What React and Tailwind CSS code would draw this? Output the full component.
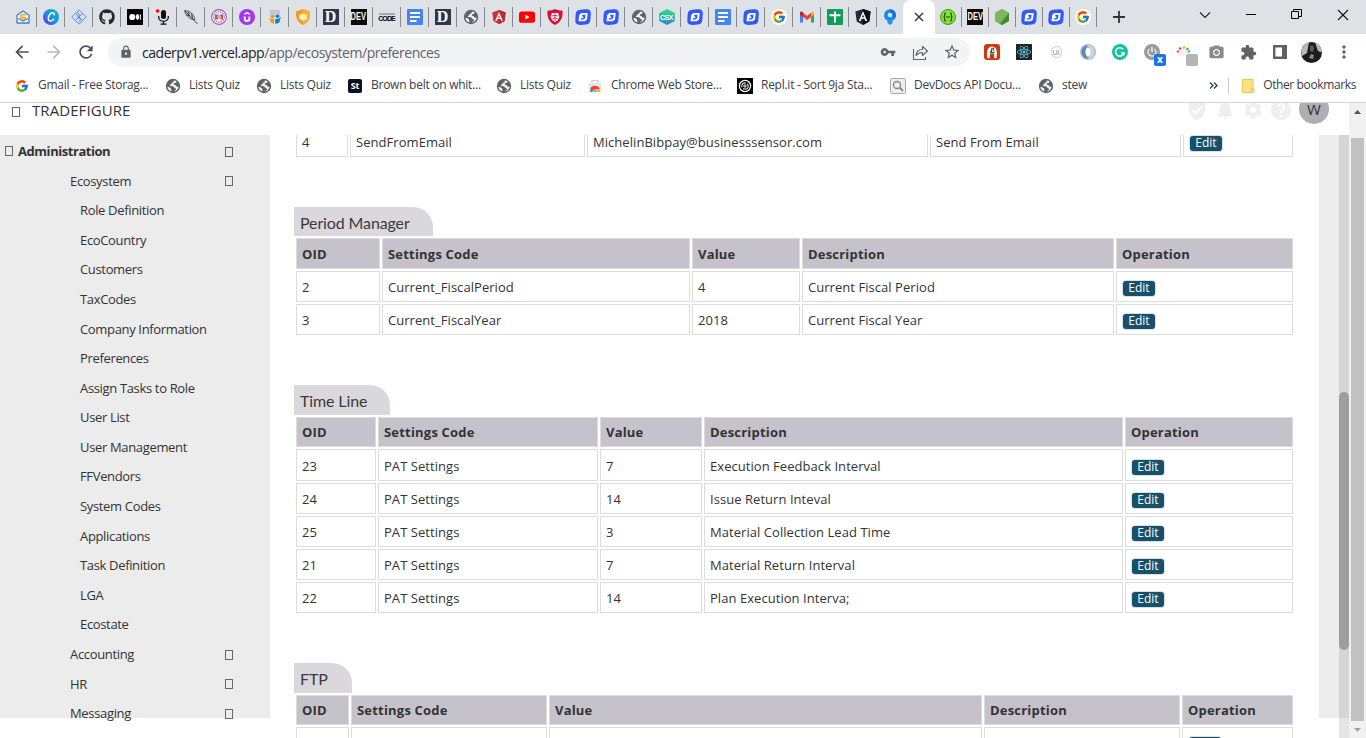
import React from "react";
import { FcGoogle } from "react-icons/fc";
import { FaGithub, FaReact } from "react-icons/fa";
import {
  MdVpnKey, MdStarBorder, MdLock, MdExtension, MdArrowBack, MdArrowForward, MdRefresh,
  MdCameraAlt, MdMoreVert, MdNotifications, MdSettings, MdHelp, MdVerifiedUser,
} from "react-icons/md";

const S = ({ children, size = 16, vb = "0 0 16 16", className = "" }) => (
  <svg width={size} height={size} viewBox={vb} className={className} fill="none">{children}</svg>
);

/* ---------- favicons ---------- */
const Mail = () => (
  <S>
    <path d="M2 6.2 8 2l6 4.200V14H2z" fill="#fff" stroke="#3b82c4" strokeWidth="1.300" strokeLinejoin="round" />
    <path d="M3 9.500 8 12l5-2.500" stroke="#3b82c4" strokeWidth="1.200" />
    <path d="M11 6.200C8.500 4.800 5 6 5.300 7.500c.3 1.200 5 .3 5.200 1.300.2 1.200-3 1.700-5.300.6" stroke="#f2a324" strokeWidth="1.400" />
  </S>
);
const Canva = () => (
  <S>
    <defs><linearGradient id="cv" x1="0" y1="1" x2="1" y2="0"><stop stopColor="#6420ff" /><stop offset=".45" stopColor="#1f8be0" /><stop offset="1" stopColor="#00c4cc" /></linearGradient></defs>
    <circle cx="8" cy="8" r="8" fill="url(#cv)" />
    <path d="M11.200 5.800c.3-1.600-.8-2.300-2-2C7 4.300 5.200 7.200 5.300 9.700c.1 2.700 3 3.300 5.400.6" stroke="#fff" strokeWidth="1.500" strokeLinecap="round" />
  </S>
);
const Hash = () => (
  <S>
    <path d="M8 .8 15.200 8 8 15.200.8 8z" stroke="#5b8def" strokeWidth="1" fill="#d5e1f7" />
    <path d="M4.400 4.400 8 8l3.600 3.600M11.600 4.400 8 8l-3.600 3.600M6 3l3 2.800L6.500 8 10 10.500 7 13.500" stroke="#5b8def" strokeWidth="1" />
  </S>
);
const Medium = () => (
  <S><rect width="16" height="16" fill="#000" /><circle cx="5.300" cy="8" r="3.100" fill="#fff" /><ellipse cx="10.500" cy="8" rx="1.600" ry="2.900" fill="#fff" /><rect x="12.800" y="5.400" width="1.100" height="5.200" fill="#fff" /></S>
);
const Mic = () => (
  <S><rect x="6" y="1" width="5" height="9" rx="2.500" fill="#111" /><path d="M3.700 7v1.200c0 5.500 9.600 5.500 9.600 0V7M8.500 12v3M5.500 15.200h6" stroke="#111" strokeWidth="1.300" /><circle cx="2.600" cy="2" r="1.800" fill="#f00" /></S>
);
const Feather = () => (
  <S><path d="M1.500 1.500c5 0 9.500 3 10.500 9.500C6.500 10.500 2.500 6.500 1.500 1.500z" fill="#d4d4d4" stroke="#555" strokeWidth=".9" /><path d="m2 2 12.500 13M5 2.500l1.500 4M8.500 4l1 5.500M3 6l4 .8" stroke="#333" strokeWidth=".9" /></S>
);
const Crest = () => (
  <S><circle cx="8" cy="8" r="7.400" fill="#fff" stroke="#8d5bb5" strokeWidth="1.100" /><circle cx="8" cy="8" r="5.200" stroke="#c9559c" strokeWidth="1.300" strokeDasharray="1.500 1" /><rect x="4" y="5.500" width="3.500" height="5" fill="#8a5cc0" /><rect x="8.500" y="5.500" width="3.500" height="5" fill="#8a5cc0" /><path d="M6.500 6.500h3.500v3.500h-3.500z" fill="#f5b942" /></S>
);
const Udemy = () => (
  <S><circle cx="8" cy="8" r="8" fill="#a435f0" /><path d="M5.700 7.500v2.200c0 3 4.700 3 4.700 0V7.500" stroke="#fff" strokeWidth="1.900" /><path d="m5.300 5.400 2.800-1.900 2.800 1.900" stroke="#fff" strokeWidth="1.300" /></S>
);
const Slide = () => (
  <S><rect x="3" y="1" width="10" height="7" fill="#c3c9cf" /><circle cx="5.500" cy="7.800" r="1.800" fill="#f79320" /><circle cx="10.500" cy="7.300" r="1.800" fill="#0f80b8" /><path d="M2 8.500c1.500 1.700 3.500 1.800 5 1.200v5.300L4 13.500z" fill="#f79320" /><path d="M14 7.500c-1.500 2-3.500 2.800-5.800 2.500v5l4-1.200z" fill="#1083bd" /></S>
);
const Shield = () => (
  <S><path d="M8 0 15 2.500c.2 6-.5 10-7 13.500C1.500 12.500.8 8.500 1 2.500z" fill="#f79a1c" /><path d="M8 0 15 2.500c.2 6-.5 10-7 13.500z" fill="#ffb02e" /><path d="m8 4.300 3.700 2v3.500L8 12 4.300 9.800V6.300z" fill="#fff3cf" /></S>
);
const DLet = () => <span className="flex h-4 w-4 items-center justify-center bg-[#33334a] font-['Liberation_Serif',serif] text-[16px] font-bold leading-none text-white">D</span>;
const Dev = () => <span className="flex h-4 w-4 items-center justify-center bg-[#0a0a0a] text-white"><span className="scale-x-75 font-['Liberation_Sans',sans-serif] text-[10px] font-bold leading-none">DEV</span></span>;
const Code = () => <span className="flex h-4 w-4 flex-col items-center justify-center"><span className="h-[2px] w-4 bg-[#aaa]" /><span className="font-['Liberation_Sans',sans-serif] text-[7px] font-black leading-[7px] tracking-[-0.9px] text-black">CODE</span></span>;
const Docs = () => <S><rect width="16" height="16" rx="1" fill="#4285f4" /><path d="M3 4h10M3 8h10M3 12h6.500" stroke="#fff" strokeWidth="1.800" /></S>;
const Ang = () => <S><path d="M8 1 14.700 3.400 13.600 12 8 15.300 2.400 12 1.300 3.400z" fill="#d32f3a" /><path d="M8 1l6.700 2.400L13.600 12 8 15.300z" fill="#b52e31" /><path d="M8 3 4.200 11.700h1.600l.7-1.900h3l.7 1.900h1.600zm0 3 1 2.500H7z" fill="#fff" fillRule="evenodd" /></S>;
const AngD = () => <S><path d="M8 0 15.600 2.600 14.300 12.500 8 16 1.700 12.500.4 2.600z" fill="#222a36" /><path d="M8 0l7.600 2.600-1.300 9.900L8 16z" fill="#0c1016" /><path d="M8 2.200 3.800 12h1.900l.8-2.200h3l.8 2.200h1.900zm0 3.300 1.100 2.800H6.900z" fill="#fff" fillRule="evenodd" /></S>;
const Yt = () => <S><rect y="2.500" width="16" height="11.300" rx="2.600" fill="#f00" /><path d="m6.400 5.700 4.200 2.400-4.200 2.400z" fill="#fff" /></S>;
const Red = () => <S><path d="M8 0c2.500 1.200 5 1.600 7.600 1.800C15.800 8 14.500 13 8 16 1.500 13 .2 8 .4 1.800 3 1.600 5.500 1.200 8 0z" fill="#d6103a" /><path d="M5 4h6l1.300 3.500L11 11l-3 2-3-2-1.300-3.500z" fill="#fff" /><path d="M8 4v8M4.500 7l3.500-.5L11.500 7M5.500 9.800 8 9l2.500.8" stroke="#d6103a" strokeWidth=".8" /></S>;
const Blue = () => (
  <S>
    <path d="M5 .8 11 .2C14.500 0 16 1.500 15.800 5l-.5 6c-.3 3-1.500 4-4.300 4.400l-5.500.5C1.800 16 .2 14.500.3 11l.4-6C.9 2.500 2.300 1.100 5 .8z" fill="#3159fb" />
    <path d="M6.300 4h6.400L12 10.300 9.800 12.300H3.500L4.200 6z" fill="#fff" />
    <path d="M7.300 5.800h3.300L10.200 9 9 10.400H5.800L6 9h1z" fill="#3159fb" />
    <path d="M6.500 7.500h1.800v1.800H6.300z" fill="#fff" />
  </S>
);
const Csx = () => (
  <span className="relative flex h-4 w-4 items-center justify-center">
    <S className="absolute inset-0"><defs><linearGradient id="cs" x2="0" y2="1"><stop stopColor="#2ee07c" /><stop offset="1" stopColor="#2a86d6" /></linearGradient></defs><path d="m8 0 7.800 4v8L8 16 .2 12V4z" fill="url(#cs)" /></S>
    <span className="relative font-['Liberation_Sans',sans-serif] text-[7px] font-bold leading-none tracking-[-0.4px] text-white">CSX</span>
  </span>
);
const G = () => <span className="flex h-4 w-4 items-center justify-center rounded-full bg-white"><FcGoogle size={14} /></span>;
const Gmail = () => <S><path d="M1 4v9.500h3V7z" fill="#4285f4" /><path d="M15 4v9.500h-3V7z" fill="#34a853" /><path d="M4 3.800 8 7l4-3.200V8l-4 3-4-3z" fill="#ea4335" /><path d="M1 4c0-1.800 1.800-1.900 3-.8V8L1 5.700z" fill="#c5221f" /><path d="M15 4c0-1.800-1.800-1.900-3-.8V8l3-2.300z" fill="#fbbc04" /></S>;
const Sheets = () => <S><rect width="16" height="16" rx="1" fill="#0f9d58" /><path d="M2.500 6.200h11M8 2.500v11" stroke="#fff" strokeWidth="2" /></S>;
const Pin = () => <S><circle cx="8" cy="6.300" r="6" fill="#1a8cf5" /><path d="M8 .3a6 6 0 0 1 5.200 9L8 6.300z" fill="#1a6ee8" /><circle cx="8" cy="6" r="2.300" fill="#d5ecff" /><path d="M5.500 11h5v3.300L8 16l-2.500-1.700z" fill="#2196f3" /></S>;
const Swag = () => <S><circle cx="8" cy="8" r="7.500" fill="#7be62c" stroke="#4d8a2a" /><path d="M6 4c-1.600 0-1.300.8-1.300 2S4.500 8 3.500 8c1 0 1.200.8 1.200 2s-.3 2 1.300 2M10 4c1.600 0 1.300.8 1.300 2s.2 2 1.200 2c-1 0-1.200.8-1.200 2s.3 2-1.300 2M5.900 8h4.400" stroke="#20440f" strokeWidth="1.100" /></S>;
const Node = () => <S><path d="m8 0 7 4v8l-7 4-7-4V4z" fill="#5fa04e" /><path d="m8 0 7 4-9 10.800L1 12V4z" fill="#7cb85c" /><path d="m15 4v8l-7 4-2-1.200z" fill="#47873b" /></S>;
const Globe = () => (
  <S>
    <circle cx="8" cy="8" r="7.200" fill="#5f6368" />
    <path d="M8.500 2.600c.8 1 .2 1.700-1 2C6.200 5 6.800 6 5.800 6.400 5 6.800 4.500 7.300 5 8c1.500.2 3.300 0 4 1.300.6 1.200 2 .7 2 2-.2 1.200-1.600 1.300-2.200 2.300 2.700-.3 4.600-2.400 4.900-5-1 .3-2.300.1-2.700-.9-.3-1-1.600-.6-2.200-1.300-.4-.8.6-1.300 1.500-1.300 1 0 .8-1.500 1.600-1.600-.9-.6-2-1-3.400-.9z" fill="#f2f3f4" />
    <path d="M2.400 8.700c1.600.2 3.300 1 3.800 2.300.3.800 0 1.700.1 2.400-2.200-.7-3.700-2.400-3.900-4.700z" fill="#f2f3f4" />
  </S>
);
const Hub = () => <FaGithub size={16} color="#24292f" />;

const TABS = [Mail, Canva, Hash, Hub, Medium, Mic, Feather, Crest, Udemy, Slide, Shield, DLet, Dev, Code, Docs, DLet, Globe, Ang, Yt, Red, Blue, Blue, Globe, Csx, Blue, Docs, Blue, G, Gmail, Sheets, AngD, Pin];
const TABS2 = [Swag, Dev, Node, Blue, Blue, G];

function TabStrip() {
  return (
    <div className="flex h-[34px] bg-[#dee1e6] pl-[9px]">
      {TABS.map((I, i) => (
        <div key={i} className={i === 31 ? "flex h-[34px] w-[26px] items-center justify-center" : "flex h-[34px] w-7 items-center"}>
          {i === 31 ? <I /> : <><div className="flex w-[27px] justify-center"><I /></div><div className="h-5 w-px bg-[#85888d]" /></>}
        </div>
      ))}
      <div className="flex h-[34px] w-8 items-center justify-center rounded-t-lg bg-white">
        <S size={12} vb="0 0 12 12"><path d="m2 2 8 8M10 2l-8 8" stroke="#333" strokeWidth="1.400" /></S>
      </div>
      {TABS2.map((I, i) => (
        <div key={i} className="flex h-[34px] w-[27px] items-center">
          <div className="flex w-[26px] justify-center"><I /></div><div className="h-5 w-px bg-[#85888d]" />
        </div>
      ))}
      <div className="flex flex-1 items-center pl-4">
        <S size={12} vb="0 0 12 12"><path d="M6 0v12M0 6h12" stroke="#333" strokeWidth="1.800" /></S>
        <div className="ml-auto flex w-[167px] items-center pb-[5px]">
          <S size={12} vb="0 0 12 12"><path d="m1 3.500 5 5 5-5" stroke="#222" strokeWidth="1.100" /></S>
          <div className="ml-[35px] h-px w-[10px] bg-black" />
          <S size={11} vb="0 0 11 11" className="ml-[35px]"><path d="M.5 2.500h7v7h-7zM2.500 2.500v-2h8v7h-3" stroke="#000" /></S>
          <S size={12} vb="0 0 12 12" className="ml-[35px]"><path d="m1 1 10 10M11 1 1 11" stroke="#111" strokeWidth="1.100" /></S>
        </div>
      </div>
    </div>
  );
}

function Toolbar() {
  return (
    <div className="flex h-9 items-center pl-3">
      <MdArrowBack size={20} color="#4d5156" />
      <MdArrowForward size={20} color="#b8babd" className="ml-3" />
      <MdRefresh size={20} color="#4d5156" className="ml-3" />
      <div className="ml-3 flex h-7 w-[862px] items-center rounded-full bg-[#f1f3f4] pl-[11px]">
        <MdLock size={14} color="#5f6368" />
        <span className="ml-[9px] whitespace-nowrap text-[14px] tracking-[-0.47px] text-[#202124]">caderpv1.vercel.app<span className="text-[#5f6368]">/app/ecosystem/preferences</span></span>
        <div className="ml-auto mr-[9px] flex items-center">
          <MdVpnKey size={16} color="#5f6368" />
          <S size={17} vb="0 0 17 17" className="ml-4"><path d="M1.500 5V15.500h12V13" stroke="#5f6368" strokeWidth="1.100" /><path d="M4 11.500c.5-4 3-6 6.500-6V2.300l5 4.700-5 4.500V8.500C8 8.500 6 9 4 11.500z" stroke="#5f6368" strokeWidth="1.100" strokeLinejoin="round" /></S>
          <MdStarBorder size={18} color="#5f6368" className="ml-[14px]" />
        </div>
      </div>
      <div className="ml-[14px] flex items-center">
        <S><rect width="16" height="16" rx="3" fill="#cc3a0d" /><path d="M3.500 14C2 6 4.500 2.500 8 2.500s6 3.500 4.500 11.500l-2 .5L10 10H6l-.5 4.500z" fill="#fff" /><path d="M5.500 9.500 7.500 4l2.500-.5.500 6z" fill="#3d5560" /><path d="m8 8 .8-4 1 4z" fill="#fff" /></S>
        <span className="ml-4 flex h-4 w-4 items-center justify-center bg-[#20232a]"><FaReact size={14} color="#61dafb" /></span>
        <span className="ml-4 flex h-4 w-4 items-center justify-center"><span className="flex h-[12px] w-[11px] items-center justify-center rounded-full border border-[#c9c9c9] text-[7px] leading-none text-[#777]">UI</span></span>
        <S className="ml-4"><circle cx="8" cy="8" r="8" fill="#a9bfd6" /><path d="M8 1a7 7 0 0 0 1 14C5 13 4.500 5 8 1z" fill="#5f87b3" /><path d="M8 15A7 7 0 0 0 7 1c4 2 4.500 10 1 14z" fill="#c8d7e6" /><ellipse cx="8" cy="8" rx="2.500" ry="4" fill="#fff" /></S>
        <S className="ml-4"><circle cx="8" cy="8" r="8" fill="#15c39a" /><path d="M11 5.200A4.200 4.200 0 1 0 11.900 9H9M12 8.300v3" stroke="#fff" strokeWidth="1.500" /></S>
        <span className="relative ml-4 h-4 w-4">
          <S><circle cx="8" cy="8" r="8" fill="#9a9a9a" /><path d="M5.500 5a4 4 0 1 0 5 0" stroke="#fff" strokeWidth="1.100" /><path d="M8 3v5" stroke="#fff" strokeWidth="1.300" /></S>
          <span className="absolute left-[10px] top-[10px] flex h-3 w-3 items-center justify-center rounded-[2px] bg-[#1a73e8] pb-[2px] text-[10px] font-bold leading-none text-white">x</span>
        </span>
        <span className="relative ml-4 h-4 w-4">
          <S><path d="M1.500 9c0-4 3-6.500 6.500-6.500S14 4.500 14 8c-2 3-4 1-6 2.500-.5 2-6.500 2.500-6.500-1.500z" fill="#f0f0f0" /><circle cx="2" cy="7.500" r="1.100" fill="#e33" /><circle cx="4" cy="4.500" r="1.200" fill="#f33" /><circle cx="8" cy="3.500" r="1.200" fill="#fb0" /><circle cx="11.500" cy="5" r="1.200" fill="#3b3" /><circle cx="13" cy="7.500" r="1" fill="#28f" /></S>
          <span className="absolute left-[10px] top-[10px] h-3 w-3 rounded-[2px] bg-[#b4b4b4]" />
        </span>
        <MdCameraAlt size={17} color="#8a8a8a" className="ml-4" />
        <MdExtension size={17} color="#5f6368" className="ml-[15px]" />
        <S size={14} vb="0 0 14 14" className="ml-4"><path d="M1.200 1.200h11.600v11.600H1.200z" stroke="#5f6368" strokeWidth="2.400" /><rect x="9" width="5" height="14" fill="#5f6368" /></S>
        <S size={21} vb="0 0 21 21" className="ml-[14px]"><circle cx="10.500" cy="10.500" r="10.500" fill="#1d1d1d" /><path d="M3 3.500A10.500 10.500 0 0 1 8 .3L6 11l-5 3C-.3 10 .5 6 3 3.500zM14 .6c4 1.500 7 5 6.900 10L17 9z" fill="#b8b8b8" /><path d="M9 4c2-1.500 4.500 0 4 3l-1.500 3L9 9z" fill="#5c5c5c" /><path d="m8 16 2-4 3 1-1 4z" fill="#8a8a8a" /></S>
        <MdMoreVert size={20} color="#5f6368" className="ml-[12px]" />
      </div>
    </div>
  );
}

const StIcon = () => <span className="flex h-[14px] w-[14px] items-center justify-center rounded-[2px] bg-[#0a0f24] text-[9px] font-bold leading-none text-white">St</span>;
const Store = () => <S><path d="M5 5V2.500h6V5" stroke="#ccc" strokeWidth="1.200" /><path d="M2 5h12l.5 9h-13z" fill="#e6e6e6" /><path d="M3 14a5 5 0 0 1 10 0z" fill="#34a853" /><path d="M3.200 11A5.200 5.200 0 0 1 12.800 11L8 13z" fill="#ea4335" /><path d="M8 14h5a5 5 0 0 0-.5-3H9z" fill="#fbbc04" /><path d="M5.800 14a2.200 2.200 0 0 1 4.400 0z" fill="#4285f4" stroke="#fff" strokeWidth=".6" /></S>;
const Spiral = () => <S><rect width="16" height="16" fill="#000" /><circle cx="8" cy="8" r="5.600" stroke="#fff" strokeWidth="1.300" /><circle cx="8" cy="8" r="3.200" stroke="#ddd" strokeWidth="1.200" strokeDasharray="7 1.500" /><circle cx="8" cy="8" r="1.200" stroke="#fff" /></S>;
const Mag = () => <S><rect x=".5" y=".5" width="15" height="15" rx="1" fill="#eee" stroke="#aaa" /><circle cx="7" cy="7" r="3.500" stroke="#888" strokeWidth="1.300" /><path d="m9.500 9.500 3.500 3.500" stroke="#888" strokeWidth="1.800" /></S>;

const BOOKMARKS = [
  [<FcGoogle size={14} />, "Gmail - Free Storag...", "w-[151px]"],
  [<Globe />, "Lists Quiz", "w-[91px]"],
  [<Globe />, "Lists Quiz", "w-[91px]"],
  [<StIcon />, "Brown belt on whit...", "w-[149px]"],
  [<Globe />, "Lists Quiz", "w-[91px]"],
  [<Store />, "Chrome Web Store...", "w-[150px]"],
  [<Spiral />, "Repl.it - Sort 9ja Sta...", "w-[153px]"],
  [<Mag />, "DevDocs API Docu...", "w-[148px]"],
  [<Globe />, "stew", "w-[60px]"],
];

function Bookmarks() {
  return (
    <div className="flex h-[33px] items-center border-b border-[#d2d4d7] pb-[5px] pl-[14px] pt-1 text-[12px] leading-4 text-[#3c4043]">
      {BOOKMARKS.map(([ic, t, w], i) => (
        <div key={i} className={"flex shrink-0 items-center whitespace-nowrap tracking-[-0.26px] " + w}>
          <span className="mr-[8px] flex w-4 justify-center">{ic}</span><span className="pb-[2px]">{t}</span>
        </div>
      ))}
      <div className="ml-auto flex items-center pr-[10px]">
        <S size={9} vb="0 0 9 9"><path d="m1 1.500 3 3-3 3M5 1.500l3 3-3 3" stroke="#3c4043" strokeWidth="1.400" /></S>
        <div className="ml-[10px] h-4 w-px bg-[#c8cacd]" />
        <S size={14} vb="0 0 14 14" className="ml-3"><path d="M1.500.5h10.500v9.500h1v3.500h-11.500z" fill="#fee08a" stroke="#ecc54b" /><path d="M10.500 13V10h2" stroke="#ecc54b" /></S>
        <span className="ml-2 whitespace-nowrap pb-[2px] tracking-[-0.38px]">Other bookmarks</span>
      </div>
    </div>
  );
}

/* ---------- page ---------- */
const Box = ({ className = "" }) => <span className={"block h-[10px] w-[8px] shrink-0 border border-[#666] " + className} />;

const SUB = ["Role Definition", "EcoCountry", "Customers", "TaxCodes", "Company Information", "Preferences", "Assign Tasks to Role", "User List", "User Management", "FFVendors", "System Codes", "Applications", "Task Definition", "LGA", "Ecostate"];

const Group = ({ children }) => (
  <div className="flex h-[29.6px] items-center justify-between pl-[70px] pr-[37px]"><span className="pt-px">{children}</span><Box className="mt-px" /></div>
);

function Sidebar() {
  return (
    <nav className="h-[583px] w-[270px] shrink-0 bg-[#ececec] pt-[1.4px] text-[13px] tracking-[-0.34px] text-[#333]">
      <div className="flex h-[29.6px] items-center pl-[5px] pr-[37px]">
        <Box /><span className="ml-[5px] flex-1 pt-[2px] font-bold tracking-[-0.45px]">Administration</span><Box className="mt-px" />
      </div>
      <Group>Ecosystem</Group>
      {SUB.map((s) => <div key={s} className="flex h-[29.6px] items-center pl-20 pt-px">{s}</div>)}
      <Group>Accounting</Group>
      <Group>HR</Group>
      <Group>Messaging</Group>
    </nav>
  );
}

const Edit = () => (
  <button className="ml-px mt-[3px] flex h-[15px] w-[32px] items-center justify-center rounded-[3px] bg-[#17506a] text-[12px] leading-none text-white shadow-[0_0_0_1px_#d9dfe3]">Edit</button>
);

const HEAD = ["OID", "Settings Code", "Value", "Description", "Operation"];

function Table({ title, tab, cols, head, rows, first = "h-[31px]" }) {
  return (
    <section className="shrink-0">
      {title && <h2 className={"flex items-center rounded-tr-[20px] bg-[#dad8dd] pl-[6px] font-['Lato',sans-serif] text-[16px] tracking-[-0.12px] text-[#3a3a3a] " + tab}>{title}</h2>}
      <div className={"ml-[2px] grid gap-[2px] " + (title ? "mt-[2px] " : "") + cols}>
        {title && HEAD.map((h) => <div key={h} className={"flex items-center border border-[#dcdcdc] bg-[#c5c2cc] pl-[5px] font-bold tracking-[0.2px] " + head}>{h}</div>)}
        {rows.map((r, i) => [...r, null].map((c, j) => (
          <div key={i + "-" + j} className={"flex items-center whitespace-nowrap border border-[#dcdcdc] pl-[5px] " + (i === 0 ? first : "h-[31px]")}>{c === null ? <Edit /> : <span className="pt-[2px] tracking-[0.05px]">{c}</span>}</div>
        )))}
      </div>
    </section>
  );
}

function Content() {
  return (
    <main className="ml-6 flex h-[603px] w-[999px] shrink-0 flex-col overflow-hidden text-[13px] text-[#333]">
      <div className="-mt-[9px]">
        <Table cols="grid-cols-[52px_235px_341px_251px_110px]" rows={[["4", "SendFromEmail", "MichelinBibpay@businesssensor.com", "Send From Email"]]} />
      </div>
      <div className="mt-[50px]">
        <Table title="Period Manager" tab="h-[29px] w-[139px] pt-[3px]" head="h-[31px] pt-[2px]" cols="grid-cols-[84px_308px_108px_312px_177px]"
          rows={[["2", "Current_FiscalPeriod", "4", "Current Fiscal Period"], ["3", "Current_FiscalYear", "2018", "Current Fiscal Year"]]} />
      </div>
      <div className="mt-[50px]">
        <Table title="Time Line" tab="h-[30px] w-[96px] pt-[2px]" head="h-[30px] pt-[2px]" first="h-[32px] pt-px" cols="grid-cols-[80px_220px_102px_419px_168px]"
          rows={[["23", "PAT Settings", "7", "Execution Feedback Interval"], ["24", "PAT Settings", "14", "Issue Return Inteval"], ["25", "PAT Settings", "3", "Material Collection Lead Time"], ["21", "PAT Settings", "7", "Material Return Interval"], ["22", "PAT Settings", "14", "Plan Execution Interva;"]]} />
      </div>
      <div className="mt-[50px]">
        <Table title="FTP" tab="h-[30px] w-[58px] pt-[2px]" head="h-[30px] pt-[2px]" cols="grid-cols-[53px_196px_433px_196px_111px]" rows={[["", "", "", ""]]} />
      </div>
    </main>
  );
}

export default function App() {
  return (
    <div className="flex h-[738px] w-[1366px] flex-col overflow-hidden bg-white font-['Open_Sans','Noto_Sans',sans-serif]">
      <TabStrip />
      <Toolbar />
      <Bookmarks />
      <div className="flex h-[635px]">
        <div className="w-[1349px]">
          <header className="flex h-8 items-start overflow-hidden pl-3">
            <Box className="mt-1" />
            <span className="-mt-px ml-3 text-[15px] leading-4 tracking-[0.08px] text-[#333]">TRADEFIGURE</span>
            <div className="-mt-[4px] ml-auto flex pr-5 text-[#efefef]">
              <MdVerifiedUser size={22} className="mr-[6px]" />
              <MdNotifications size={22} className="mr-[6px]" />
              <MdSettings size={22} className="mr-[5px]" />
              <MdHelp size={24} className="-mt-px mr-[6px]" />
              <span className="-mt-[5px] flex h-[30px] w-[30px] items-center justify-center rounded-full bg-[#b0aeb4] text-[15px] text-[#333]">W</span>
            </div>
          </header>
          <div className="flex h-[603px]">
            <Sidebar />
            <Content />
            <div className="ml-[26px] h-[583px] w-5 bg-[#ececec]" />
            <div className="h-[603px] w-[10px] bg-[#e5e5e5]">
              <div className="h-[583px] bg-[#d5d5d5] pt-[257px]"><div className="h-[258px] rounded-full bg-[#9e9e9e]" /></div>
            </div>
          </div>
        </div>
        <div className="flex w-[17px] flex-col items-center bg-[#f1f1f1]">
          <div className="flex h-[35px] items-start pt-[7px]"><S size={7} vb="0 0 7 4" className="h-1"><path d="M0 4 3.500 0 7 4z" fill="#505050" /></S></div>
          <div className="h-[583px] w-[13px] bg-[#c1c1c1]" />
          <div className="flex h-[17px] items-center"><S size={7} vb="0 0 7 4" className="h-1"><path d="m0 0 3.500 4L7 0z" fill="#a3a3a3" /></S></div>
        </div>
      </div>
    </div>
  );
}
